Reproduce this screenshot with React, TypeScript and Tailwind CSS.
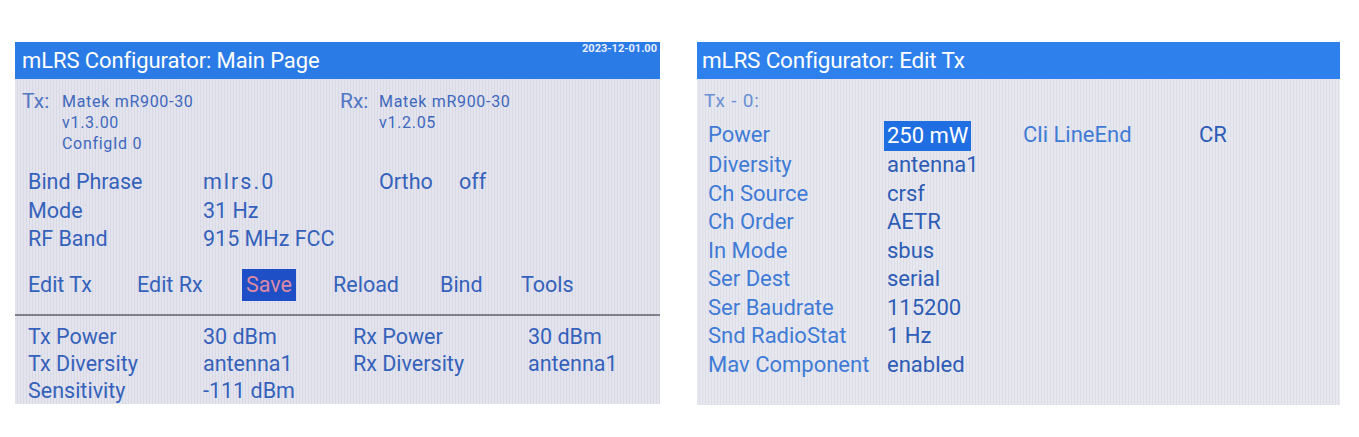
import React from "react";

const font = { fontFamily: "Roboto, 'Noto Sans', sans-serif" };

const mainRows = [
  { label: "Bind Phrase", value: "mlrs.0", spaced: true },
  { label: "Mode", value: "31 Hz" },
  { label: "RF Band", value: "915 MHz FCC" },
];

const statusRows = [
  ["Tx Power", "30 dBm", "Rx Power", "30 dBm"],
  ["Tx Diversity", "antenna1", "Rx Diversity", "antenna1"],
  ["Sensitivity", "-111 dBm", "", ""],
];

const menu = [
  { name: "Edit Tx", w: "w-[109px]" },
  { name: "Edit Rx", w: "w-[105px]" },
  { name: "Save", w: "w-[91px]", active: true },
  { name: "Reload", w: "w-[107px]" },
  { name: "Bind", w: "w-[81px]" },
  { name: "Tools", w: "w-[80px]" },
];

const txParams = [
  ["Power", "250 mW"],
  ["Diversity", "antenna1"],
  ["Ch Source", "crsf"],
  ["Ch Order", "AETR"],
  ["In Mode", "sbus"],
  ["Ser Dest", "serial"],
  ["Ser Baudrate", "115200"],
  ["Snd RadioStat", "1 Hz"],
  ["Mav Component", "enabled"],
];

// fine vertical line pattern of the LCD panel
const mainBg =
  "bg-[repeating-linear-gradient(90deg,#e4e4ee_0px,#e4e4ee_2px,#d9d9e5_2px,#d9d9e5_3px)]";
const editBg =
  "bg-[repeating-linear-gradient(90deg,#e7e8ef_0px,#e7e8ef_2px,#dcdde7_2px,#dcdde7_3px)]";

const MainPage: React.FC = () => (
  <div className={`w-[645px] h-[362px] flex flex-col ${mainBg}`}>
    <div className="relative h-[38px] bg-[#2b7be6] flex items-center pl-[7px]">
      <span className="text-[22px] text-white tracking-[-0.1px]">
        mLRS Configurator: Main Page
      </span>
      <span className="absolute right-[3px] top-[1px] text-[11px] font-bold text-[#e8eefc] leading-none">
        2023-12-01.00
      </span>
    </div>

    {/* device info */}
    <div className="flex pt-[11px] text-[#3d68bd]">
      <div className="flex w-[325px] pl-[7px]">
        <span className="w-[40px] text-[21px] leading-[22px] text-[#5277c4]">Tx:</span>
        <div className="text-[16px] tracking-[0.7px] leading-[21px] pt-[1px]">
          <div>Matek mR900-30</div>
          <div>v1.3.00</div>
          <div>ConfigId 0</div>
        </div>
      </div>
      <div className="flex">
        <span className="w-[39px] text-[21px] leading-[22px] text-[#5277c4]">Rx:</span>
        <div className="text-[16px] tracking-[0.7px] leading-[21px] pt-[1px]">
          <div>Matek mR900-30</div>
          <div>v1.2.05</div>
        </div>
      </div>
    </div>

    {/* link settings */}
    <div className="pl-[13px] pt-[14px] text-[21.5px] leading-[28.5px] text-[#3462bb]">
      {mainRows.map((r, i) => (
        <div key={r.label} className="flex">
          <span className="w-[175px]">{r.label}</span>
          <span className={`w-[176px] ${r.spaced ? "tracking-[2px]" : ""}`}>{r.value}</span>
          {i === 0 && (
            <>
              <span className="w-[80px]">Ortho</span>
              <span>off</span>
            </>
          )}
        </div>
      ))}
    </div>

    <div className="flex pl-[13px] pt-[15px] h-[61px] text-[21.5px] text-[#3462bb]">
      {menu.map((m) => (
        <div key={m.name} className={m.w}>
          {m.active ? (
            <span className="inline-block h-[32px] px-[4px] leading-[32px] bg-[#1f4fc6] text-[#dc8aa5]">
              {m.name}
            </span>
          ) : (
            <span className="inline-block h-[32px] leading-[32px]">{m.name}</span>
          )}
        </div>
      ))}
    </div>

    <div className="h-[2px] bg-[#80808c]" />

    {/* live stats */}
    <div className="pl-[13px] pt-[7px] text-[21.5px] leading-[27px] text-[#3462bb]">
      {statusRows.map((r) => (
        <div key={r[0]} className="flex">
          <span className="w-[175px]">{r[0]}</span>
          <span className="w-[150px]">{r[1]}</span>
          <span className="w-[175px]">{r[2]}</span>
          <span>{r[3]}</span>
        </div>
      ))}
    </div>
  </div>
);

const EditTx: React.FC = () => (
  <div className={`w-[643px] h-[363px] flex flex-col ${editBg}`}>
    <div className="h-[37px] bg-[#2e81ec] flex items-center pl-[5px]">
      <span className="text-[22.5px] text-white tracking-[-0.2px]">mLRS Configurator: Edit Tx</span>
    </div>

    <div className="pl-[7px] pt-[11px] text-[19px] tracking-[0.8px] leading-[22px] text-[#6a8fd4]">Tx - 0:</div>

    <div className="pl-[11px] pt-[9px] text-[22px] leading-[28.5px]">
      {txParams.map(([label, value], i) => (
        <div key={label} className="flex">
          <span className="w-[179px] text-[#3f7bd6]">{label}</span>
          {i === 0 ? (
            <span className="w-[136px]">
              <span className="inline-block -ml-[3px] px-[3px] h-[30px] leading-[30px] bg-[#1f6fe3] text-white">
                {value}
              </span>
            </span>
          ) : (
            <span className="text-[#2d5cb6]">{value}</span>
          )}
          {i === 0 && (
            <>
              <span className="w-[176px] text-[#3f7bd6]">Cli LineEnd</span>
              <span className="text-[#2d5cb6]">CR</span>
            </>
          )}
        </div>
      ))}
    </div>
  </div>
);

export default function App() {
  return (
    <div className="w-[1359px] h-[437px] bg-white flex items-start gap-[37px] pl-[15px] pt-[42px]" style={font}>
      <MainPage />
      <EditTx />
    </div>
  );
}
